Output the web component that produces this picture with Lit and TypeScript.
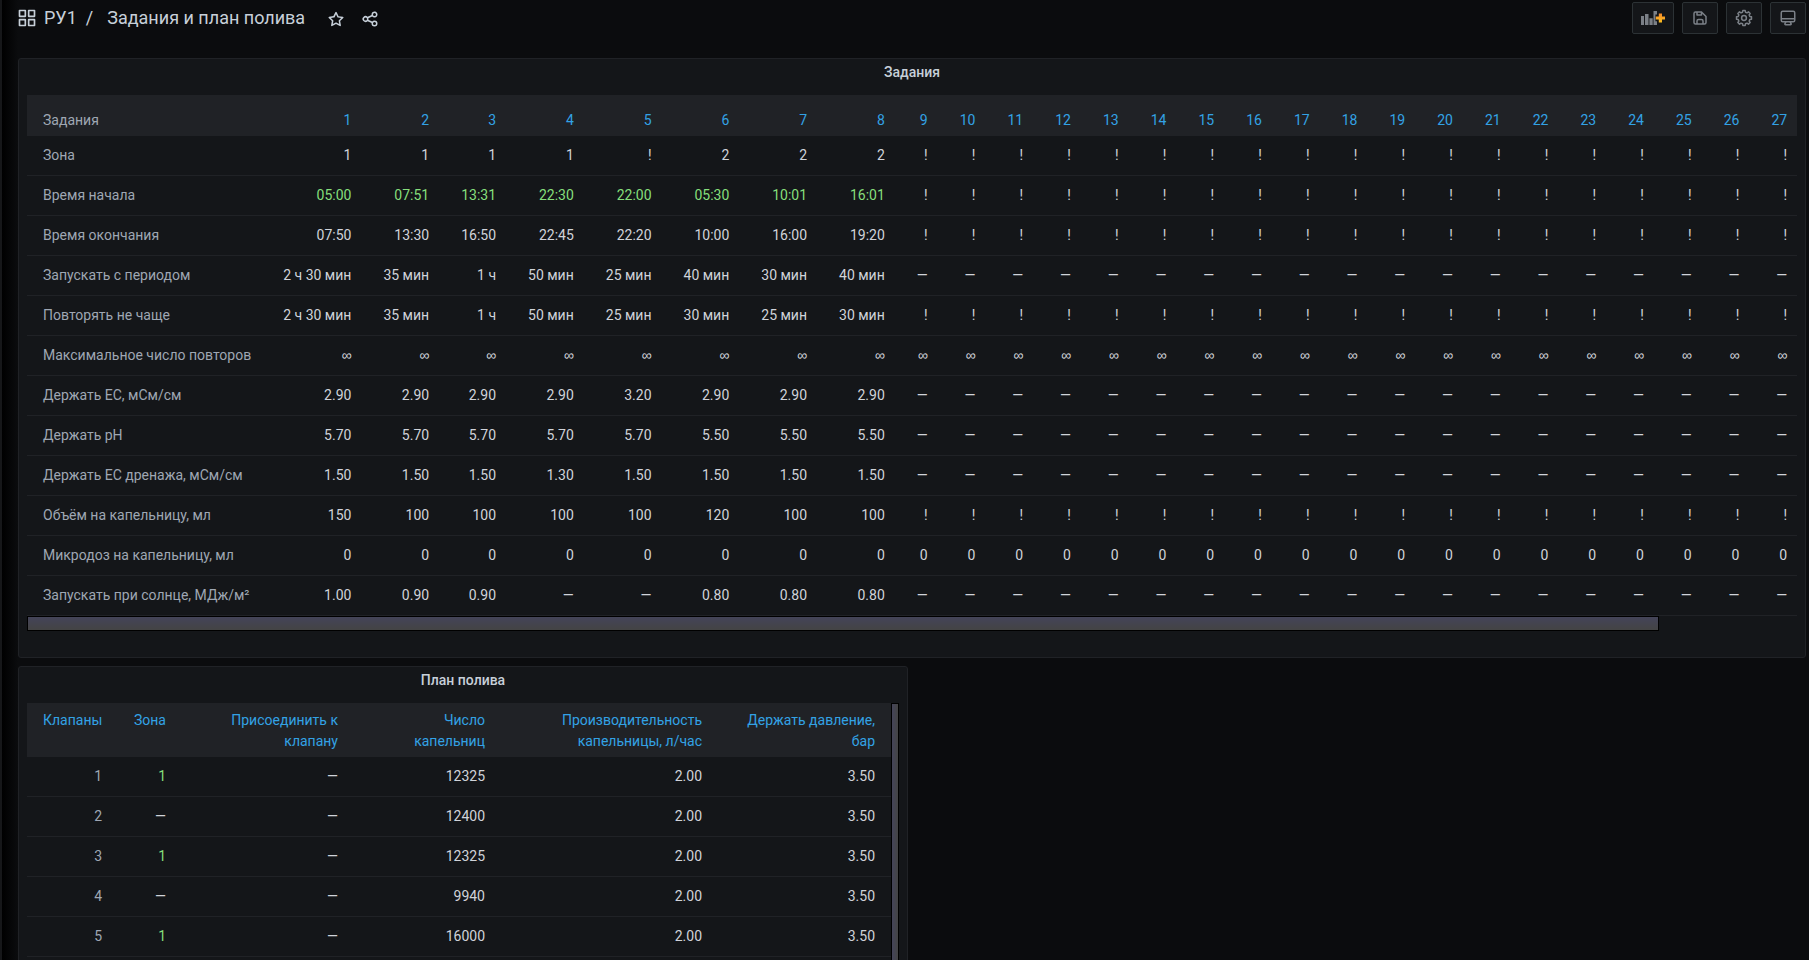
import { LitElement, html, css, svg, nothing } from "lit";
import { customElement, property } from "lit/decorators.js";
import { classMap } from "lit/directives/class-map.js";

const gear = (() => {
  const teeth = 8;
  const step = (Math.PI * 2) / teeth;
  const pts: string[] = [];
  const at = (r: number, a: number) =>
    `${(12 + r * Math.sin(a)).toFixed(2)} ${(12 - r * Math.cos(a)).toFixed(2)}`;
  for (let i = 0; i < teeth; i++) {
    const a = i * step;
    pts.push(at(8, a - step * 0.32), at(10.1, a - step * 0.2), at(10.1, a + step * 0.2), at(8, a + step * 0.32));
  }
  return `M${pts.join("L")}Z`;
})();

const icons: Record<string, unknown> = {
  apps: svg`<path d="M10,13H3a1,1,0,0,0-1,1v7a1,1,0,0,0,1,1h7a1,1,0,0,0,1-1V14A1,1,0,0,0,10,13ZM9,20H4V15H9ZM21,2H14a1,1,0,0,0-1,1v7a1,1,0,0,0,1,1h7a1,1,0,0,0,1-1V3A1,1,0,0,0,21,2ZM20,9H15V4h5Zm1,4H14a1,1,0,0,0-1,1v7a1,1,0,0,0,1,1h7a1,1,0,0,0,1-1V14A1,1,0,0,0,21,13Zm-1,7H15V15h5ZM10,2H3A1,1,0,0,0,2,3v7a1,1,0,0,0,1,1h7a1,1,0,0,0,1-1V3A1,1,0,0,0,10,2ZM9,9H4V4H9Z"/>`,
  star: svg`<path d="M22,9.67A1,1,0,0,0,21.14,9l-5.69-.83L12.9,3a1,1,0,0,0-1.8,0L8.55,8.16,2.86,9a1,1,0,0,0-.81.68,1,1,0,0,0,.25,1l4.13,4-1,5.68A1,1,0,0,0,6.9,21.44L12,18.77l5.1,2.67a.93.93,0,0,0,.46.12,1,1,0,0,0,.59-.19,1,1,0,0,0,.4-1l-1-5.68,4.13-4A1,1,0,0,0,22,9.67Zm-6.15,4a1,1,0,0,0-.29.88l.72,4.2-3.76-2a1.06,1.06,0,0,0-.94,0l-3.76,2,.72-4.2a1,1,0,0,0-.29-.88l-3-3,4.21-.61a1,1,0,0,0,.76-.55L12,5.7l1.88,3.82a1,1,0,0,0,.76.55l4.21.61Z"/>`,
  share: svg`<path d="M18,14a4,4,0,0,0-3.08,1.48l-5.1-2.35a3.64,3.64,0,0,0,0-2.26l5.1-2.35A4,4,0,1,0,14,6a4.17,4.17,0,0,0,.07.71L8.79,9.14a4,4,0,1,0,0,5.72l5.28,2.43A4.17,4.17,0,0,0,14,18a4,4,0,1,0,4-4ZM18,4a2,2,0,1,1-2,2A2,2,0,0,1,18,4ZM6,14a2,2,0,1,1,2-2A2,2,0,0,1,6,14Zm12,6a2,2,0,1,1,2-2A2,2,0,0,1,18,20Z"/>`,
  save: svg`<path d="M20.71,9.29l-6-6a1,1,0,0,0-.32-.21A1.09,1.09,0,0,0,14,3H6A3,3,0,0,0,3,6V18a3,3,0,0,0,3,3H18a3,3,0,0,0,3-3V10A1,1,0,0,0,20.71,9.29ZM9,5h4V7H9Zm6,14H9V16a1,1,0,0,1,1-1h4a1,1,0,0,1,1,1Zm4-1a1,1,0,0,1-1,1H17V16a3,3,0,0,0-3-3H10a3,3,0,0,0-3,3v3H6a1,1,0,0,1-1-1V6A1,1,0,0,1,6,5H7V8A1,1,0,0,0,8,9h6a1,1,0,0,0,1-1V6.41l4,4Z"/>`,
  cog: svg`<path d=${gear} fill="none" stroke="currentColor" stroke-width="2" stroke-linejoin="round"/><circle cx="12" cy="12" r="3.2" fill="none" stroke="currentColor" stroke-width="2"/>`,
  monitor: svg`<path d="M19,2H5A3,3,0,0,0,2,5V15a3,3,0,0,0,3,3H7.64l-.58,1a2,2,0,0,0,0,2,2,2,0,0,0,1.75,1h6.46A2,2,0,0,0,17,21a2,2,0,0,0,0-2l-.59-1H19a3,3,0,0,0,3-3V5A3,3,0,0,0,19,2ZM8.77,20,10,18H14l1.2,2ZM20,15a1,1,0,0,1-1,1H5a1,1,0,0,1-1-1V14H20Zm0-3H4V5A1,1,0,0,1,5,4H19a1,1,0,0,1,1,1Z"/>`,
};

const icon = (name: string, size = 18) =>
  html`<svg class="icon" width=${size} height=${size} viewBox="0 0 24 24" fill="currentColor" aria-hidden="true">${icons[name]}</svg>`;

const addPanelIcon = html`<svg class="icon" width="24" height="14" viewBox="0 0 24 14" aria-hidden="true">
  <defs>
    <linearGradient id="plus" x1="0" y1="0" x2="0" y2="1">
      <stop offset="0" stop-color="#f58a2b" /><stop offset="1" stop-color="#fcc01e" />
    </linearGradient>
  </defs>
  <path fill="currentColor" d="M0 5h3v9H0zM4 3h3.500v11H4zM8.400 7.300h3.300V14H8.400zM12.500 0H16v3.600h-1.600v6.600H16V14h-3.500z" />
  <path fill="url(#plus)" d="M17.800 2.500h3.200v3h3v3h-3v3h-3.200v-3h-3v-3h3z" />
</svg>`;

interface Row {
  label: string;
  values: string[];
  rest: string;
  green?: boolean;
}

const TASKS = 27;

const taskRows: Row[] = [
  { label: "Зона", values: ["1", "1", "1", "1", "!", "2", "2", "2"], rest: "!" },
  { label: "Время начала", values: ["05:00", "07:51", "13:31", "22:30", "22:00", "05:30", "10:01", "16:01"], rest: "!", green: true },
  { label: "Время окончания", values: ["07:50", "13:30", "16:50", "22:45", "22:20", "10:00", "16:00", "19:20"], rest: "!" },
  { label: "Запускать с периодом", values: ["2 ч 30 мин", "35 мин", "1 ч", "50 мин", "25 мин", "40 мин", "30 мин", "40 мин"], rest: "—" },
  { label: "Повторять не чаще", values: ["2 ч 30 мин", "35 мин", "1 ч", "50 мин", "25 мин", "30 мин", "25 мин", "30 мин"], rest: "!" },
  { label: "Максимальное число повторов", values: Array(8).fill("∞"), rest: "∞" },
  { label: "Держать EC, мСм/см", values: ["2.90", "2.90", "2.90", "2.90", "3.20", "2.90", "2.90", "2.90"], rest: "—" },
  { label: "Держать pH", values: ["5.70", "5.70", "5.70", "5.70", "5.70", "5.50", "5.50", "5.50"], rest: "—" },
  { label: "Держать EC дренажа, мСм/см", values: ["1.50", "1.50", "1.50", "1.30", "1.50", "1.50", "1.50", "1.50"], rest: "—" },
  { label: "Объём на капельницу, мл", values: ["150", "100", "100", "100", "100", "120", "100", "100"], rest: "!" },
  { label: "Микродоз на капельницу, мл", values: Array(8).fill("0"), rest: "0" },
  { label: "Запускать при солнце, МДж/м²", values: ["1.00", "0.90", "0.90", "—", "—", "0.80", "0.80", "0.80"], rest: "—" },
];

const planRows = [
  ["1", "1", "—", "12325", "2.00", "3.50"],
  ["2", "—", "—", "12400", "2.00", "3.50"],
  ["3", "1", "—", "12325", "2.00", "3.50"],
  ["4", "—", "—", "9940", "2.00", "3.50"],
  ["5", "1", "—", "16000", "2.00", "3.50"],
];

const tableStyles = css`
  :host {
    display: block;
    min-width: 0;
  }
  table {
    border-collapse: separate;
    border-spacing: 0;
    font-size: 14px;
    line-height: 21px;
  }
  th,
  td {
    padding: 9px 16px;
    border-bottom: 1px solid #202226;
    text-align: right;
    font-weight: 400;
    white-space: nowrap;
    color: #d0d3d9;
  }
  thead th {
    background: #202226;
    border-bottom: 0;
    color: #33a2e5;
    vertical-align: top;
  }
  tbody th,
  thead th.plain {
    color: #9fa7b3;
  }
  td.green {
    color: #86df7c;
  }
`;

@customElement("dashboard-panel")
class DashboardPanel extends LitElement {
  @property() heading = "";

  static styles = css`
    :host {
      display: flex;
      flex-direction: column;
      min-width: 0;
      min-height: 600px;
      box-sizing: border-box;
      background: #141619;
      border: 1px solid #202226;
      border-radius: 3px;
    }
    .title {
      margin: 0;
      padding-bottom: 2px;
      font-size: 14px;
      font-weight: 500;
      line-height: 26px;
      text-align: center;
      color: #c7d0d9;
    }
    .body {
      flex: 1;
      display: grid;
      padding: 8px;
      min-width: 0;
    }
  `;

  render() {
    return html`<h2 class="title">${this.heading}</h2>
      <div class="body"><slot></slot></div>`;
  }
}

@customElement("tasks-table")
class TasksTable extends LitElement {
  static styles = [
    tableStyles,
    css`
      .scroll {
        overflow: hidden;
      }
      th:first-child {
        text-align: left;
      }
      thead th {
        padding: 15px 16px 5px;
      }
      td.infinity {
        font-family: "Liberation Sans", sans-serif;
      }
      .thumb {
        box-sizing: border-box;
        height: 15px;
        border: 1px solid #000;
        background: linear-gradient(#444459, #444444);
      }
    `,
  ];

  render() {
    const columns = Array.from({ length: TASKS }, (_, i) => i);
    return html`
      <div class="scroll">
        <table>
          <thead>
            <tr>
              <th class="plain" scope="col">Задания</th>
              ${columns.map((i) => html`<th scope="col">${i + 1}</th>`)}
            </tr>
          </thead>
          <tbody>
            ${taskRows.map(
              (row) => html`<tr>
                <th scope="row">${row.label}</th>
                ${columns.map(
                  (i) => html`<td
                    class=${classMap({ green: !!row.green && i < row.values.length, infinity: row.rest === "∞" })}
                  >${row.values[i] ?? row.rest}</td>`
                )}
              </tr>`
            )}
          </tbody>
        </table>
      </div>
      <div class="thumb" style="width: 92.2%"></div>
    `;
  }
}

@customElement("plan-table")
class PlanTable extends LitElement {
  static styles = [
    tableStyles,
    css`
      :host {
        display: flex;
      }
      .scroll {
        flex: 1;
        min-width: 0;
      }
      table {
        width: 100%;
        table-layout: fixed;
      }
      thead th {
        padding: 7px 16px 5px;
        white-space: normal;
      }
      .c0 { width: 91px; }
      .c1 { width: 64px; }
      .c2 { width: 172px; }
      .c3 { width: 147px; }
      .c4 { width: 217px; }
      .c5 { width: 173px; }
      .thumb {
        box-sizing: border-box;
        width: 8px;
        border: 1px solid #000;
        background: linear-gradient(to right, #444459, #444444);
      }
    `,
  ];

  render() {
    const heads = [
      "Клапаны",
      "Зона",
      "Присоединить к клапану",
      "Число капельниц",
      "Производительность капельницы, л/час",
      "Держать давление, бар",
    ];
    return html`
      <div class="scroll">
        <table>
          <colgroup>${heads.map((_, i) => html`<col class="c${i}" />`)}</colgroup>
          <thead>
            <tr>${heads.map((h) => html`<th scope="col">${h}</th>`)}</tr>
          </thead>
          <tbody>
            ${planRows.map(
              ([n, ...cells]) => html`<tr>
                <th scope="row">${n}</th>
                ${cells.map((c, i) => html`<td class=${i === 0 && c !== "—" ? "green" : nothing}>${c}</td>`)}
              </tr>`
            )}
          </tbody>
        </table>
      </div>
      <div class="thumb"></div>
    `;
  }
}

@customElement("app-root")
class AppRoot extends LitElement {
  static styles = css`
    :host {
      display: flex;
      height: 100vh;
      overflow: hidden;
      background: #0b0c0e;
      color: #c7d0d9;
      font-family: Roboto, sans-serif;
    }
    .rail {
      flex: none;
      width: 2px;
      background: #161719;
    }
    .main {
      flex: 1;
      min-width: 0;
      padding: 0 3px 0 16px;
      background: linear-gradient(to right, #000, #0b0c0e 16px);
    }
    .topbar {
      display: flex;
      align-items: center;
      justify-content: space-between;
      height: 36px;
      margin-bottom: 22px;
    }
    .crumbs,
    .tools {
      display: flex;
      align-items: center;
    }
    .tools {
      gap: 8px;
    }
    .crumbs {
      margin-left: -1px;
      font-size: 18px;
      line-height: 24px;
    }
    .crumbs a {
      color: inherit;
      text-decoration: none;
    }
    .home {
      display: flex;
      align-items: center;
      gap: 7px;
    }
    .sep {
      margin: 0 14px 0 9px;
    }
    .icon {
      display: block;
    }
    button {
      display: flex;
      align-items: center;
      justify-content: center;
      margin: 0;
      padding: 0;
      border: 0;
      background: none;
      color: inherit;
    }
    .actions {
      display: flex;
      gap: 16px;
      margin-left: 22px;
      padding-top: 2px;
    }
    .tool {
      height: 32px;
      padding: 0 8px;
      border: 1px solid #2c3235;
      border-radius: 2px;
      background: #141619;
      color: #7b8087;
    }
    .panels {
      display: grid;
      grid-template-columns: minmax(0, 1fr) minmax(0, 1fr);
      gap: 8px;
    }
    .wide {
      grid-column: 1 / -1;
    }
  `;

  render() {
    return html`
      <div class="rail"></div>
      <div class="main">
        <header class="topbar">
          <nav class="crumbs">
            <a class="home" href="#">${icon("apps", 20)}<span>РУ1</span></a>
            <span class="sep">/</span>
            <a href="#">Задания и план полива</a>
            <div class="actions">
              <button aria-label="Добавить в избранное">${icon("star")}</button>
              <button aria-label="Поделиться">${icon("share")}</button>
            </div>
          </nav>
          <div class="tools">
            <button class="tool" aria-label="Добавить панель">${addPanelIcon}</button>
            <button class="tool" aria-label="Сохранить">${icon("save")}</button>
            <button class="tool" aria-label="Настройки">${icon("cog")}</button>
            <button class="tool" aria-label="Режим просмотра">${icon("monitor")}</button>
          </div>
        </header>
        <main class="panels">
          <dashboard-panel class="wide" heading="Задания"><tasks-table></tasks-table></dashboard-panel>
          <dashboard-panel heading="План полива"><plan-table></plan-table></dashboard-panel>
        </main>
      </div>
    `;
  }
}
